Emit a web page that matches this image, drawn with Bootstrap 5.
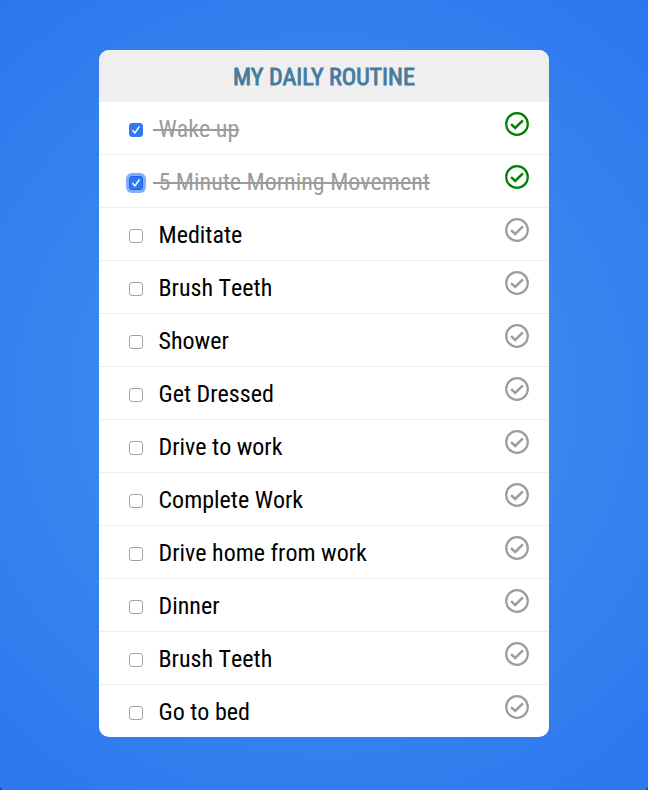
<!DOCTYPE html>
<html lang="en">
<head>
<meta charset="utf-8">
<meta name="viewport" content="width=device-width, initial-scale=1">
<title>My Daily Routine</title>
<link href="https://cdn.jsdelivr.net/npm/bootstrap@5.3.0/dist/css/bootstrap.min.css" rel="stylesheet">
<style>
  html { background: #2a2f3a; }
  body {
    height: 790px;
    padding-top: 50px;
    overflow: hidden;
    border-radius: 0 0 4px 4px;
    background: radial-gradient(circle, #3e90ee 0%, #3786ee 50%, #2d76ee 100%);
    font-family: "Roboto Condensed", Roboto, "Liberation Sans", sans-serif;
    font-stretch: 75%;
    color: #000;
  }
  .routine { width: 450px; border-radius: 10px; }
  .routine-head { height: 52px; background: #efefef; color: #457b9d; font-size: 24px; font-weight: 400; line-height: 54px; -webkit-text-stroke: .9px #457b9d; }
  .task-name { display: inline-block; white-space: pre; }
  .task { height: 53px; padding: 0 20px 0 30px; border-bottom: 1px solid #eee; }
  .task:last-child { height: 52px; border-bottom: 0; }
  .task .form-check-input { width: 14px; height: 14px; margin: 3px 10px 0 0; border: 1px solid #a5a5a5; border-radius: 3px; box-shadow: none; }
  .task .form-check-input:checked {
    background-color: #2f79f6; border-color: #2f79f6;
    background-image: url("data:image/svg+xml,%3csvg xmlns='http://www.w3.org/2000/svg' viewBox='0 0 12 12'%3e%3cpath fill='none' stroke='%23fff' stroke-width='1.5' stroke-linecap='round' stroke-linejoin='round' d='M2.8 6.6 4.9 9 9.1 2.8'/%3e%3c/svg%3e");
  }
  .task .form-check-input.is-focused { box-shadow: 0 0 0 3px #7fb0fa; border-color: #1565f0; }
  .task-name { font-size: 24px; line-height: 52px; padding-top: 2px; font-kerning: none; }
  .done .task-name { color: #9b9b9b; text-decoration: line-through; text-decoration-thickness: 2px; }
  .task-icon { width: 24px; height: 24px; margin-bottom: 8px; color: #9d9d9d; }
  .done .task-icon { color: green; }
</style>
<script src="https://cdn.jsdelivr.net/npm/bootstrap@5.3.0/dist/js/bootstrap.bundle.min.js"></script>
</head>
<body>
<svg class="d-none" xmlns="http://www.w3.org/2000/svg">
  <symbol id="tick" viewBox="0 0 24 24">
    <circle cx="12" cy="12" r="10.8" fill="none" stroke="currentColor" stroke-width="2.2"/>
    <path d="M6.1 12.1 10.2 16 17.9 8.4" fill="none" stroke="currentColor" stroke-width="2.5"/>
  </symbol>
</svg>
<main class="routine mx-auto bg-white overflow-hidden">
  <h1 class="routine-head text-center mb-0">MY DAILY ROUTINE</h1>
  <ul class="list-unstyled mb-0">
    <li class="task done d-flex align-items-center"><label class="d-flex align-items-center me-auto"><input class="form-check-input" type="checkbox" checked><span class="task-name"> Wake up</span></label><svg class="task-icon"><use href="#tick"/></svg></li>
    <li class="task done d-flex align-items-center"><label class="d-flex align-items-center me-auto"><input class="form-check-input is-focused" type="checkbox" checked><span class="task-name"> 5 Minute Morning Movement</span></label><svg class="task-icon"><use href="#tick"/></svg></li>
    <li class="task d-flex align-items-center"><label class="d-flex align-items-center me-auto"><input class="form-check-input" type="checkbox"><span class="task-name"> Meditate</span></label><svg class="task-icon"><use href="#tick"/></svg></li>
    <li class="task d-flex align-items-center"><label class="d-flex align-items-center me-auto"><input class="form-check-input" type="checkbox"><span class="task-name"> Brush Teeth</span></label><svg class="task-icon"><use href="#tick"/></svg></li>
    <li class="task d-flex align-items-center"><label class="d-flex align-items-center me-auto"><input class="form-check-input" type="checkbox"><span class="task-name"> Shower</span></label><svg class="task-icon"><use href="#tick"/></svg></li>
    <li class="task d-flex align-items-center"><label class="d-flex align-items-center me-auto"><input class="form-check-input" type="checkbox"><span class="task-name"> Get Dressed</span></label><svg class="task-icon"><use href="#tick"/></svg></li>
    <li class="task d-flex align-items-center"><label class="d-flex align-items-center me-auto"><input class="form-check-input" type="checkbox"><span class="task-name"> Drive to work</span></label><svg class="task-icon"><use href="#tick"/></svg></li>
    <li class="task d-flex align-items-center"><label class="d-flex align-items-center me-auto"><input class="form-check-input" type="checkbox"><span class="task-name"> Complete Work</span></label><svg class="task-icon"><use href="#tick"/></svg></li>
    <li class="task d-flex align-items-center"><label class="d-flex align-items-center me-auto"><input class="form-check-input" type="checkbox"><span class="task-name"> Drive home from work</span></label><svg class="task-icon"><use href="#tick"/></svg></li>
    <li class="task d-flex align-items-center"><label class="d-flex align-items-center me-auto"><input class="form-check-input" type="checkbox"><span class="task-name"> Dinner</span></label><svg class="task-icon"><use href="#tick"/></svg></li>
    <li class="task d-flex align-items-center"><label class="d-flex align-items-center me-auto"><input class="form-check-input" type="checkbox"><span class="task-name"> Brush Teeth</span></label><svg class="task-icon"><use href="#tick"/></svg></li>
    <li class="task d-flex align-items-center"><label class="d-flex align-items-center me-auto"><input class="form-check-input" type="checkbox"><span class="task-name"> Go to bed</span></label><svg class="task-icon"><use href="#tick"/></svg></li>
  </ul>
</main>
</body>
</html>
